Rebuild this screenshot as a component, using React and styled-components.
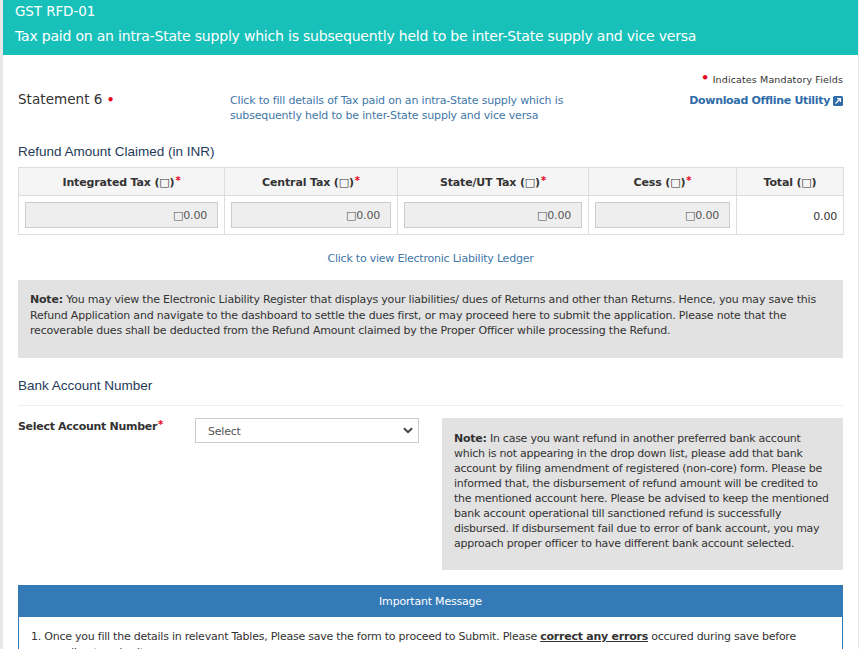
import React from 'react';
import styled, { createGlobalStyle } from 'styled-components';

const Global = createGlobalStyle`
  html, body {
    margin: 0;
    padding: 0;
    background: #fff;
    overflow: hidden;
  }
  * {
    box-sizing: border-box;
  }
`;

const Page = styled.div`
  width: 859px;
  height: 649px;
  overflow: hidden;
  border-left: 3px solid #e8e8e8;
  border-right: 1px solid #e8e8e8;
  font-family: 'DejaVu Sans', 'Noto Sans', sans-serif;
  font-size: 11px;
  letter-spacing: -0.2px;
  color: #333;
`;

const Banner = styled.div`
  height: 55px;
  background: #17c1b9;
  color: #fff;
  padding: 2px 12px 0;
`;

const BannerCode = styled.div`
  font-size: 13.5px;
  letter-spacing: -0.1px;
  line-height: 18px;
`;

const BannerTitle = styled.div`
  font-size: 14px;
  letter-spacing: -0.2px;
  line-height: 20px;
  margin-top: 6px;
`;

const Content = styled.div`
  padding: 17px 15px 0;
`;

const TopRow = styled.div`
  display: grid;
  grid-template-columns: 212px 1fr auto;
  height: 70px;
`;

const Statement = styled.div`
  font-size: 13.5px;
  letter-spacing: 0.05px;
  line-height: 20px;
  padding-top: 17px;
`;

const Star = styled.span`
  color: #e8001c;
  font-weight: bold;
`;

const StatementDot = styled(Star)`
  font-size: 12px;
`;

const Sup = styled(Star)`
  font-size: 10px;
  line-height: 0;
  vertical-align: 2px;
  margin-left: 1px;
`;

const InfoLink = styled.a`
  color: #3f77a8;
  line-height: 15px;
  padding-top: 21px;
  width: 345px;
  letter-spacing: -0.17px;
`;

const RightInfo = styled.div`
  text-align: right;
`;

const Mandatory = styled.div`
  font-size: 9.5px;
  line-height: 14px;
  margin-top: 1px;
  letter-spacing: 0.13px;
`;

const MandatoryDot = styled(Star)`
  font-size: 13px;
  line-height: 10px;
  vertical-align: 1px;
`;

const DownloadLink = styled.a`
  display: inline-flex;
  align-items: center;
  gap: 3px;
  margin-top: 6px;
  color: #2f6ca8;
  font-weight: bold;
  font-size: 11px;
  letter-spacing: -0.33px;
  line-height: 16px;
`;

const SectionTitle = styled.h4`
  margin: 0;
  padding-top: 1px;
  font-weight: normal;
  font-family: 'Liberation Sans', Arial, sans-serif;
  font-size: 13.5px;
  letter-spacing: 0;
  line-height: 18px;
  color: #1f3a5a;
`;

const Table = styled.table`
  width: 825px;
  margin-top: 6px;
  border-collapse: collapse;
  table-layout: fixed;
`;

const Th = styled.th`
  height: 28px;
  padding: 1px 0 0;
  background: #f5f5f5;
  border: 1px solid #ddd;
  font-size: 11px;
  letter-spacing: -0.15px;
  color: #333;
`;

const Td = styled.td`
  height: 39px;
  padding: ${({ $plain }) => ($plain ? '7px 6px 5px' : '6px')};
  border: 1px solid #ddd;
  text-align: right;
`;

const AmountBox = styled.div`
  height: 26px;
  line-height: 26px;
  padding-right: 10px;
  background: #eee;
  border: 1px solid #ccc;
  color: #555;
`;

const LedgerLink = styled.a`
  display: block;
  margin-top: 16px;
  text-align: center;
  color: #3f77a8;
  line-height: 16px;
  letter-spacing: -0.22px;
`;

const GrayNote = styled.div`
  margin-top: 13px;
  height: 78px;
  padding: 12px 12px 0;
  background: #e2e2e2;
  line-height: 15.5px;
`;

const BankTitle = styled(SectionTitle)`
  margin-top: 18px;
  padding-bottom: 10px;
  border-bottom: 1px solid #eee;
`;

const BankRow = styled.div`
  display: grid;
  grid-template-columns: 177px 224px 1fr;
  margin-top: 12px;
`;

const FieldLabel = styled.label`
  font-weight: bold;
  line-height: 15px;
  letter-spacing: -0.3px;
  padding-top: 1px;
`;

const SelectBox = styled.div`
  height: 25px;
  padding: 2px 5px 0 12px;
  display: flex;
  align-items: center;
  justify-content: space-between;
  border: 1px solid #ccc;
  color: #555;

  svg {
    margin-top: -2px;
  }
`;

const SideNote = styled.div`
  margin-left: 23px;
  height: 152px;
  padding: 13px 10px 0 12px;
  background: #e2e2e2;
  line-height: 15px;
  letter-spacing: -0.25px;
`;

const MessagePanel = styled.div`
  margin-top: 15px;
  border: 1px solid #337ab7;
`;

const MessageHead = styled.div`
  height: 31px;
  line-height: 31px;
  background: #337ab7;
  color: #fff;
  text-align: center;
`;

const MessageBody = styled.div`
  padding: 12px 12px;
  line-height: 16px;
  letter-spacing: -0.24px;
`;

const columns = [
  { label: 'Integrated Tax', width: 206, required: true },
  { label: 'Central Tax', width: 173, required: true },
  { label: 'State/UT Tax', width: 191, required: true },
  { label: 'Cess', width: 148, required: true },
  { label: 'Total', width: 107, required: false },
];

const App = () => {
  return (
    <Page>
      <Global />
      <Banner>
        <BannerCode>GST RFD-01</BannerCode>
        <BannerTitle>Tax paid on an intra-State supply which is subsequently held to be inter-State supply and vice versa</BannerTitle>
      </Banner>
      <Content>
        <TopRow>
          <Statement>
            Statement 6 <StatementDot>•</StatementDot>
          </Statement>
          <InfoLink>
            Click to fill details of Tax paid on an intra-State supply which is subsequently held to be inter-State supply and vice versa
          </InfoLink>
          <RightInfo>
            <Mandatory>
              <MandatoryDot>•</MandatoryDot> Indicates Mandatory Fields
            </Mandatory>
            <DownloadLink>
              Download Offline Utility
              <svg width="10" height="10" viewBox="0 0 10 10">
                <rect width="10" height="10" rx="1.5" fill="#2f6ca8" />
                <path d="M2.5 7.5 L7 3 M4 2.6 H7.4 V6" stroke="#fff" strokeWidth="1.3" fill="none" />
              </svg>
            </DownloadLink>
          </RightInfo>
        </TopRow>
        <SectionTitle>Refund Amount Claimed (in INR)</SectionTitle>
        <Table>
          <colgroup>
            {columns.map(({ label, width }) => (
              <col key={label} style={{ width }} />
            ))}
          </colgroup>
          <thead>
            <tr>
              {columns.map(({ label, required }) => (
                <Th key={label}>
                  {label} (□){required && <Sup>*</Sup>}
                </Th>
              ))}
            </tr>
          </thead>
          <tbody>
            <tr>
              {columns.map(({ label, required }) => (
                <Td key={label} $plain={!required}>
                  {required ? <AmountBox>□0.00</AmountBox> : '0.00'}
                </Td>
              ))}
            </tr>
          </tbody>
        </Table>
        <LedgerLink>Click to view Electronic Liability Ledger</LedgerLink>
        <GrayNote>
          <b>Note:</b> You may view the Electronic Liability Register that displays your liabilities/ dues of Returns and other than Returns. Hence, you may save this Refund Application and navigate to the dashboard to settle the dues first, or may proceed here to submit the application. Please note that the recoverable dues shall be deducted from the Refund Amount claimed by the Proper Officer while processing the Refund.
        </GrayNote>
        <BankTitle>Bank Account Number</BankTitle>
        <BankRow>
          <FieldLabel>
            Select Account Number<Sup>*</Sup>
          </FieldLabel>
          <SelectBox>
            Select
            <svg width="10" height="7" viewBox="0 0 10 7">
              <path d="M1 1.2 L5 5.2 L9 1.2" stroke="#444" strokeWidth="2" fill="none" />
            </svg>
          </SelectBox>
          <SideNote>
            <b>Note:</b> In case you want refund in another preferred bank account which is not appearing in the drop down list, please add that bank account by filing amendment of registered (non-core) form. Please be informed that, the disbursement of refund amount will be credited to the mentioned account here. Please be advised to keep the mentioned bank account operational till sanctioned refund is successfully disbursed. If disbursement fail due to error of bank account, you may approach proper officer to have different bank account selected.
          </SideNote>
        </BankRow>
        <MessagePanel>
          <MessageHead>Important Message</MessageHead>
          <MessageBody>
            1. Once you fill the details in relevant Tables, Please save the form to proceed to Submit. Please <b><u>correct any errors</u></b> occured during save before proceeding to submit.
          </MessageBody>
        </MessagePanel>
      </Content>
    </Page>
  );
};

export default App;
